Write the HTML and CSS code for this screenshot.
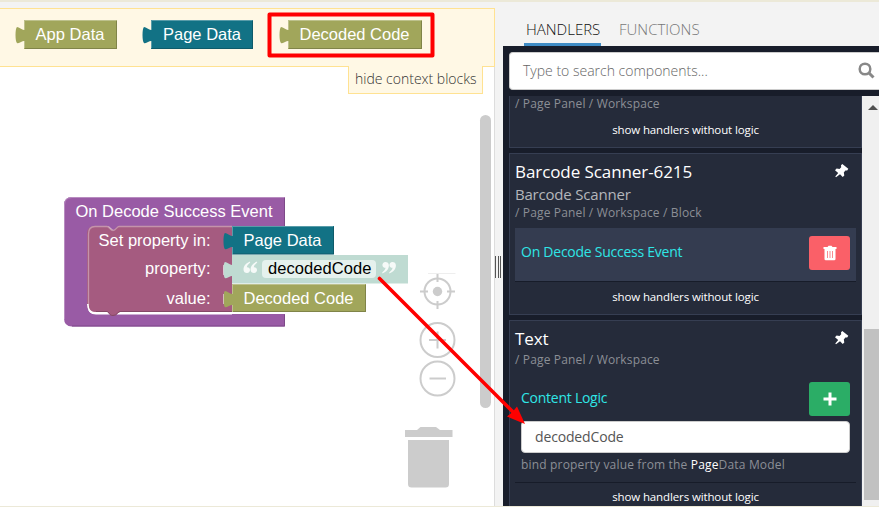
FILE: index.html
```
<!DOCTYPE html>
<html lang="en">
<head>
<meta charset="utf-8">
<title>Logic editor</title>
<link rel="stylesheet" href="styles.css">
</head>
<body>
<div class="app">
  <svg width="0" height="0" class="defs" aria-hidden="true">
    <defs>
      <path id="pin" d="M8.300 0 14.300 4.700 13.200 6.600 11.400 6.600 9.800 8.600 10.300 11.400 8.700 12.900 6 10.300 2 13.300 1.300 12.600 4.200 8.900 1 6.200 2.600 4.500 5.500 4.900 7.200 3.200 7 1.300Z"/>
    </defs>
  </svg>
  <section class="editor">
    <div class="context">
      <svg class="block" width="103" height="30" viewBox="14 0 103 30">
        <path class="olive" d="M24 0H117V29H24V21C22 21 19 24 17 23C15 22 15 8 17 7C19 7 22 10 24 10Z"/>
        <path class="shine" d="M24.500 28V21M24.500 10V.5H116.500"/><path class="shade" d="M25 28.500H116.500V1"/>
        <text x="35.500" y="19.500" textLength="69">App Data</text>
      </svg>
      <svg class="block gap-a" width="112" height="30" viewBox="14 0 112 30">
        <path class="teal" d="M24 0H126V29H24V21C22 21 19 24 17 23C15 22 15 8 17 7C19 7 22 10 24 10Z"/>
        <path class="shine" d="M24.500 28V21M24.500 10V.5H125.500"/><path class="shade" d="M25 28.500H125.500V1"/>
        <text x="36" y="19.500" textLength="78">Page Data</text>
      </svg>
      <svg class="block gap-b" width="144" height="30" viewBox="14 0 144 30">
        <path class="olive" d="M24 0H158V29H24V21C22 21 19 24 17 23C15 22 15 8 17 7C19 7 22 10 24 10Z"/>
        <path class="shine" d="M24.500 28V21M24.500 10V.5H157.500"/><path class="shade" d="M25 28.500H157.500V1"/>
        <text x="35.500" y="19.500" textLength="110">Decoded Code</text>
      </svg>
    </div>
    <div class="hide">hide context blocks</div>
    <svg class="canvas" width="494" height="413" viewBox="0 93 494 413">
      <rect x="480" y="115" width="11" height="293" rx="5.500" fill="#ccc"/>
      <path fill="#995ba5" d="M72 197H285V226.500H124L119 231H114L109 226.500H95Q88 226.500 88 234V306Q88 314 95 314H285V326.500H72Q64 326.500 64 318V205Q64 197 72 197Z"/>
      <path fill="none" stroke="#b88cc0" d="M64.500 319V205Q64.500 197.500 72 197.500H284.500"/>
      <path fill="none" stroke="#7d4988" d="M284.500 198V226M72 326H284.500V314.500"/>
      <path fill="#fff" d="M87.500 303V306Q88 314.500 96 314.500H232V311H96Z"/>
      <path fill="#a55b80" d="M95 226H107C109 226 110 230 113 230.500C116 230 117 226 119 226H232V312H120C118 312 117 316 113 316C109 316 109 312 107 312H95Q87 312 87 304V234Q87 226 95 226Z"/>
      <path fill="none" stroke="#c493aa" stroke-width="1.300" d="M88.500 305V234Q88.500 226.500 95 226.500H107C109 226.500 110 230.500 113 230.500C116 230.500 117 226.500 119 226.500H232"/>
      <path fill="none" stroke="#fff" stroke-width="1.600" d="M87.800 304Q88 313.300 96 313.300H106"/>
      <path fill="none" stroke="#844966" d="M96 311.500H107C109 311.500 109 315.500 113 315.500C117 315.500 118 311.500 120 311.500H232"/>
      <g>
        <path class="teal" d="M232 226H334V254.500H232V247C230 247 227 250 225 249C223 248 223 234 225 233C227 233 230 236 232 236Z"/>
        <path class="shine" d="M232.500 254V247M232.500 236V226.500H333"/><path class="shade" d="M233 254H333.500V227"/>
        <path fill="#bfdbd2" d="M232 255H408V283.500H232V276C230 276 227 279 225 278C223 277 223 263 225 262C227 262 230 265 232 265Z"/>
        <path class="olive" d="M232 284H366V312H232V305C230 305 227 308 225 307C223 306 223 292 225 291C227 291 230 294 232 294Z"/>
        <path class="shine" d="M232.500 312V305M232.500 294V284.500H365"/><path class="shade" d="M233 311.500H365.500V285"/>
        <path fill="none" stroke="#fff" stroke-opacity=".5" d="M223.500 265V275M223.500 294V304"/>
        <rect x="262" y="260" width="114" height="18" rx="4" fill="#e5f1ed"/>
        <g fill="#fff" fill-opacity=".85">
          <path id="q" d="M250 261.500C246 263 243.500 266 243.500 269.500C243.500 272 245 273 247 273C249 273 250 271.500 250 270C250 268 248.500 267 246.800 267.200C247 265.500 248.500 264 250.200 262.500Z"/>
          <path d="M257 261.500C253 263 250.500 266 250.500 269.500C250.500 272 252 273 254 273C256 273 257 271.500 257 270C257 268 255.500 267 253.800 267.200C254 265.500 255.500 264 257.200 262.500Z"/>
          <g transform="rotate(180 319.700 267.500)"><use href="#q"/><use href="#q" x="7"/></g>
        </g>
      </g>
      <g class="labels">
        <text x="75.500" y="217" textLength="197">On Decode Success Event</text>
        <text x="98.500" y="246" textLength="112">Set property in:</text>
        <text x="145" y="274" textLength="65.500">property:</text>
        <text x="166.500" y="304" textLength="44">value:</text>
        <text x="243.500" y="246" textLength="78">Page Data</text>
        <text x="268" y="274" textLength="103.500" class="dark">decodedCode</text>
        <text x="243.500" y="304" textLength="110">Decoded Code</text>
      </g>
      <g fill="none" stroke="#ccc" stroke-width="2">
        <circle cx="437.500" cy="291.500" r="13"/><path d="M437.500 274V282M437.500 301V309M420 291.500H428M447 291.500H455"/>
        <circle cx="437.500" cy="340" r="17"/><path d="M429 340H446M437.500 331.500V348.500"/>
        <circle cx="437.500" cy="378.500" r="17"/><path d="M429.500 378.500H446"/>
      </g>
      <circle cx="437.500" cy="291.500" r="4.700" fill="#ccc"/>
      <path d="M428 273.500H455.500" fill="none" stroke="#eee"/>
      <path fill="#ccc" d="M405 430H417L420.500 427H436L440 430H452.500V437H405ZM408 440H449V484Q449 487.500 445.500 487.500H411.500Q408 487.500 408 484Z"/>
    </svg>
  </section>
  <div class="splitter"><i></i><i></i><i></i></div>
  <aside class="side">
    <nav class="tabs"><span class="tab active">HANDLERS</span><span class="tab fn">FUNCTIONS</span></nav>
    <div class="panel">
      <div class="search"><span>Type to search components...</span>
        <svg width="18" height="18" viewBox="0 0 18 18" fill="none" stroke="#888" stroke-width="2.500"><circle cx="7" cy="7" r="5.300"/><path d="M11 11 15.500 15.500" stroke-width="3"/></svg>
      </div>
      <div class="scroll">
        <div class="list">
          <article class="card cut"><p class="path">/ Page Panel / Workspace</p><p class="more">show handlers without logic</p></article>
          <article class="card scanner">
            <svg class="pin" width="15" height="15"><use href="#pin"/></svg>
            <h2>Barcode Scanner-6215</h2>
            <p class="type">Barcode Scanner</p>
            <p class="path longpath">/ Page Panel / Workspace / Block</p>
            <div class="row selected"><span class="evt">On Decode Success Event</span>
              <button class="btn red" aria-label="Delete"><svg width="14" height="16" viewBox="0 0 14 16"><path fill="#fff" d="M.5 2H4.500L5.500 .8H8.500L9.500 2H13.500V4H.5ZM1.500 4H12.500V14Q12.500 15.300 11.200 15.300H2.800Q1.500 15.300 1.500 14Z"/><path stroke="#fa8a90" d="M4.500 6V13M7 6V13M9.500 6V13"/></svg></button>
            </div>
            <p class="more">show handlers without logic</p>
          </article>
          <article class="card text">
            <svg class="pin" width="15" height="15"><use href="#pin"/></svg>
            <h2>Text</h2>
            <p class="path">/ Page Panel / Workspace</p>
            <div class="row logic"><span class="cl">Content Logic</span>
              <button class="btn green" aria-label="Add"><svg width="14" height="14" viewBox="0 0 14 14"><path stroke="#fff" stroke-width="3" d="M.5 7H13.500M7 .5V13.500"/></svg></button>
            </div>
            <div class="input"><span>decodedCode</span></div>
            <p class="help">bind property value from the <b>Page</b>Data Model</p>
            <p class="more ruled">show handlers without logic</p>
          </article>
        </div>
        <div class="bar"><i class="up"></i><i class="thumb"></i></div>
      </div>
    </div>
  </aside>
  <svg class="marks" width="879" height="507">
    <rect x="269.500" y="14.500" width="163" height="41" fill="none" stroke="red" stroke-width="4" stroke-linejoin="round"/>
    <path d="M379.500 278.500 515 414" stroke="red" stroke-width="3.600" stroke-linecap="round"/>
    <path fill="red" d="M525 424 507 416.500 512.500 412 517 406.500Z"/>
  </svg>
</div>
</body>
</html>
```
FILE: styles.css
```
* { box-sizing: border-box; }
body { margin: 0; font-family: "Open Sans", sans-serif; }
p, h2 { margin: 0; font-weight: 400; white-space: nowrap; }
.app { position: relative; display: flex; width: 879px; height: 507px; overflow: hidden; background: #f3f3f3; border-top: 2px solid #ece9d8; border-bottom: 1px solid #ece9d8; }
.defs { position: absolute; }
.editor { display: flex; flex-direction: column; width: 495px; padding-top: 6px; position: relative; flex: none; }
.context { display: flex; align-items: flex-start; height: 59px; flex: none; padding: 11px 0 0 14px; background: #fff8e5; border: 1px solid #ffe292; border-left: 0; }
.block { display: block; }
.block text, .labels text { font-family: "Liberation Sans", sans-serif; font-size: 16.5px; fill: #fff; }
.labels .dark { fill: #000; }
.gap-a { margin-left: 24px; }
.gap-b { margin-left: 25px; }
.olive { fill: #a1a65b; }
.teal { fill: #127285; }
.shine { fill: none; stroke: #fff; stroke-opacity: .3; }
.shade { fill: none; stroke: #000; stroke-opacity: .2; }
.hide { position: absolute; left: 348px; top: 64px; width: 135px; height: 28px; padding-left: 6px; line-height: 25px; font-size: 14px; font-weight: 300; color: #333; background: #fff8e5; border: 1px solid #ffe292; border-top: 0; white-space: nowrap; }
.canvas { margin-top: 0; padding-top: 26px; box-sizing: content-box; background: #fff; border-right: 1px solid #ddd; flex: none; }
.splitter { width: 8px; flex: none; display: flex; gap: 1px; padding: 254px 0 0; }
.splitter i { width: 1px; height: 22px; margin-right: .5px; background: #555; }
.side { width: 376px; flex: none; display: flex; flex-direction: column; }
.tabs { display: flex; height: 44px; padding: 14px 0 0 21px; font-size: 15px; font-weight: 300; color: #777; }
.tab { height: 30px; padding: 0 2px; line-height: 27px; border-bottom: 3px solid transparent; }
.tab.active { width: 77px; color: #111; border-color: #3f8cc5; }
.fn { margin-left: 16px; }
.panel { flex: 1; min-height: 0; background: #181d2a; padding: 6px 0 0 6px; display: flex; flex-direction: column; }
.search { height: 38px; flex: none; display: flex; align-items: center; justify-content: space-between; padding: 0 3px 0 13px; background: #fff; border: 1px solid #ccc; border-right: 0; border-radius: 4px 0 0 4px; font-size: 14px; font-weight: 300; color: #666; }
.search span { padding-bottom: 2px; }
.scroll { flex: 1; min-height: 0; margin-top: 6px; display: flex; }
.list { width: 353px; overflow: hidden; }
.card { position: relative; border: 1px solid #363e52; background: #252b3a; margin-bottom: 5px; padding: 0 5px; color: #fff; }
.cut { height: 52px; border-top: 0; }
.path { font-size: 12px; line-height: 16px; color: #8c8f96; letter-spacing: .15px; }
.more { font-size: 11.500px; line-height: 16px; text-align: center; letter-spacing: -.12px; }
.cut .more { margin-top: 10px; }
.scanner { height: 162px; padding-top: 6px; }
.card h2 { font-size: 17px; line-height: 24px; letter-spacing: -.08px; }
.type { font-size: 15px; line-height: 20px; color: #b4b6bb; letter-spacing: -.2px; }
.pin { position: absolute; left: 324px; top: 10px; fill: #fff; }
.row { display: flex; align-items: center; justify-content: space-between; padding: 0 6px; font-size: 14px; color: #2fe6e6; letter-spacing: -.25px; }
.row span { padding-bottom: 3px; }
.selected { height: 54px; margin-top: 7px; padding-bottom: 3px; background: #343c50; border-bottom: 1px solid #171c29; }
.longpath { margin-top: 1px; }
.scanner .more { margin-top: 7px; }
.btn { width: 41px; height: 34px; padding: 0; border: 0; border-radius: 3px; display: flex; align-items: center; justify-content: center; }
.red { background: #fa6068; }
.green { background: #2bad66; }
.text { height: 200px; padding-top: 6px; }
.text .path { margin-top: 1px; }
.logic { height: 34px; margin-top: 14px; }
.input { height: 32px; margin: 5px 6px 0; padding-left: 13px; line-height: 30px; font-size: 14px; letter-spacing: -.15px; color: #555; background: #fff; border: 1px solid #ccc; border-radius: 4px; }
.help { margin: 4px 6px 0; font-size: 12px; line-height: 16px; color: #8c8f96; letter-spacing: .17px; }
.help b { font-weight: 400; color: #fff; }
.ruled { margin-top: 9px; padding-top: 6px; border-top: 1px solid #171c29; }
.bar { width: 17px; background: #f0f0f0; }
.up { display: block; margin: 9px 0 0 6px; width: 0; border: 5px solid transparent; border-top: 0; border-bottom: 5px solid #505050; }
.thumb { display: block; height: 171px; margin: 219px 0 0 2px; background: #c1c1c1; }
.marks { position: absolute; left: 0; top: -2px; pointer-events: none; }
```
